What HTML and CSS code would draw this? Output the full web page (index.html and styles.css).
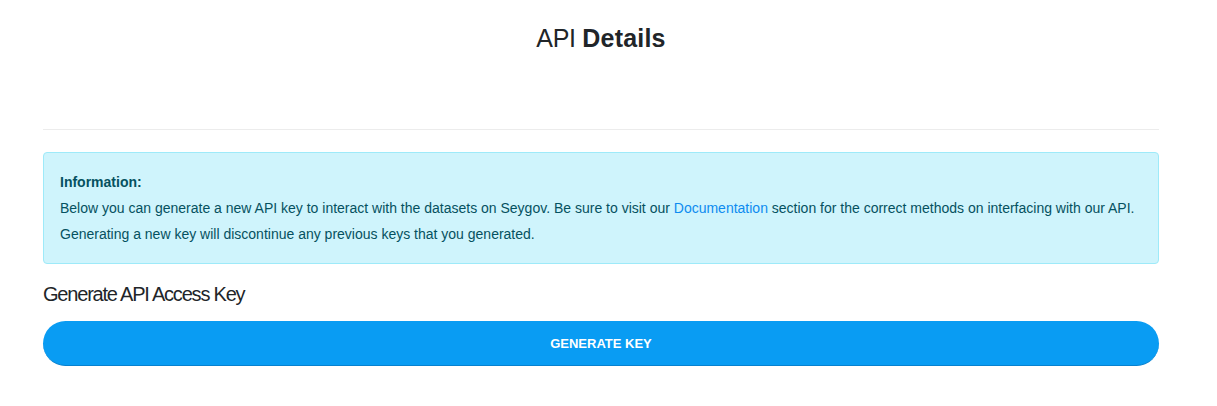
FILE: index.html
```html
<!DOCTYPE html>
<html lang="en">
<head>
<meta charset="utf-8">
<title>API Details</title>
<link rel="stylesheet" href="styles.css">
</head>
<body>
<div class="page">
  <h1 class="title"><span class="light">API</span> <span class="strong">Details</span></h1>
  <hr class="divider">
  <div class="alert">
    <div class="alert-title">Information:</div>
    <div>Below you can generate a new API key to interact with the datasets on Seygov. Be sure to visit our <a href="#" class="link">Documentation</a> section for the correct methods on interfacing with our API.</div>
    <div>Generating a new key will discontinue any previous keys that you generated.</div>
  </div>
  <h2 class="subtitle">Generate API Access Key</h2>
  <button class="btn">GENERATE KEY</button>
</div>
</body>
</html>
```
FILE: styles.css
```css
* { box-sizing: border-box; }
html, body { margin: 0; padding: 0; background: #fff; }
body { font-family: "Liberation Sans", Arial, sans-serif; color: #212529; }
.page { padding: 23px 58px 0 43px; display: flex; flex-direction: column; }
.title {
  margin: 0;
  font-size: 25px;
  line-height: 30px;
  text-align: center;
  font-weight: 400;
  letter-spacing: -0.3px;
  color: #212529;
}
.title .strong { font-weight: 900; letter-spacing: 0.2px; }
.divider {
  margin: 76px 0 0;
  border: 0;
  border-top: 1px solid #ececec;
  height: 0;
}
.alert {
  margin-top: 22px;
  background: #cff4fc;
  border: 1px solid #9eeaf9;
  border-radius: 4px;
  padding: 16px;
  font-size: 14px;
  line-height: 26px;
  color: #055160;
}
.alert-title { font-weight: 700; }
.link { color: #0d8bf0; text-decoration: none; }
.subtitle {
  margin: 16px 0 0;
  font-size: 20px;
  line-height: 28px;
  font-weight: 400;
  letter-spacing: -1.2px;
  color: #212529;
}
.btn {
  margin-top: 13px;
  height: 45px;
  width: 100%;
  border: 0;
  border-bottom: 1px solid #0781cf;
  border-radius: 23px;
  background: #099cf3;
  color: #fff;
  font-family: "Liberation Sans", Arial, sans-serif;
  font-weight: 700;
  font-size: 13px;
  cursor: pointer;
}
```
